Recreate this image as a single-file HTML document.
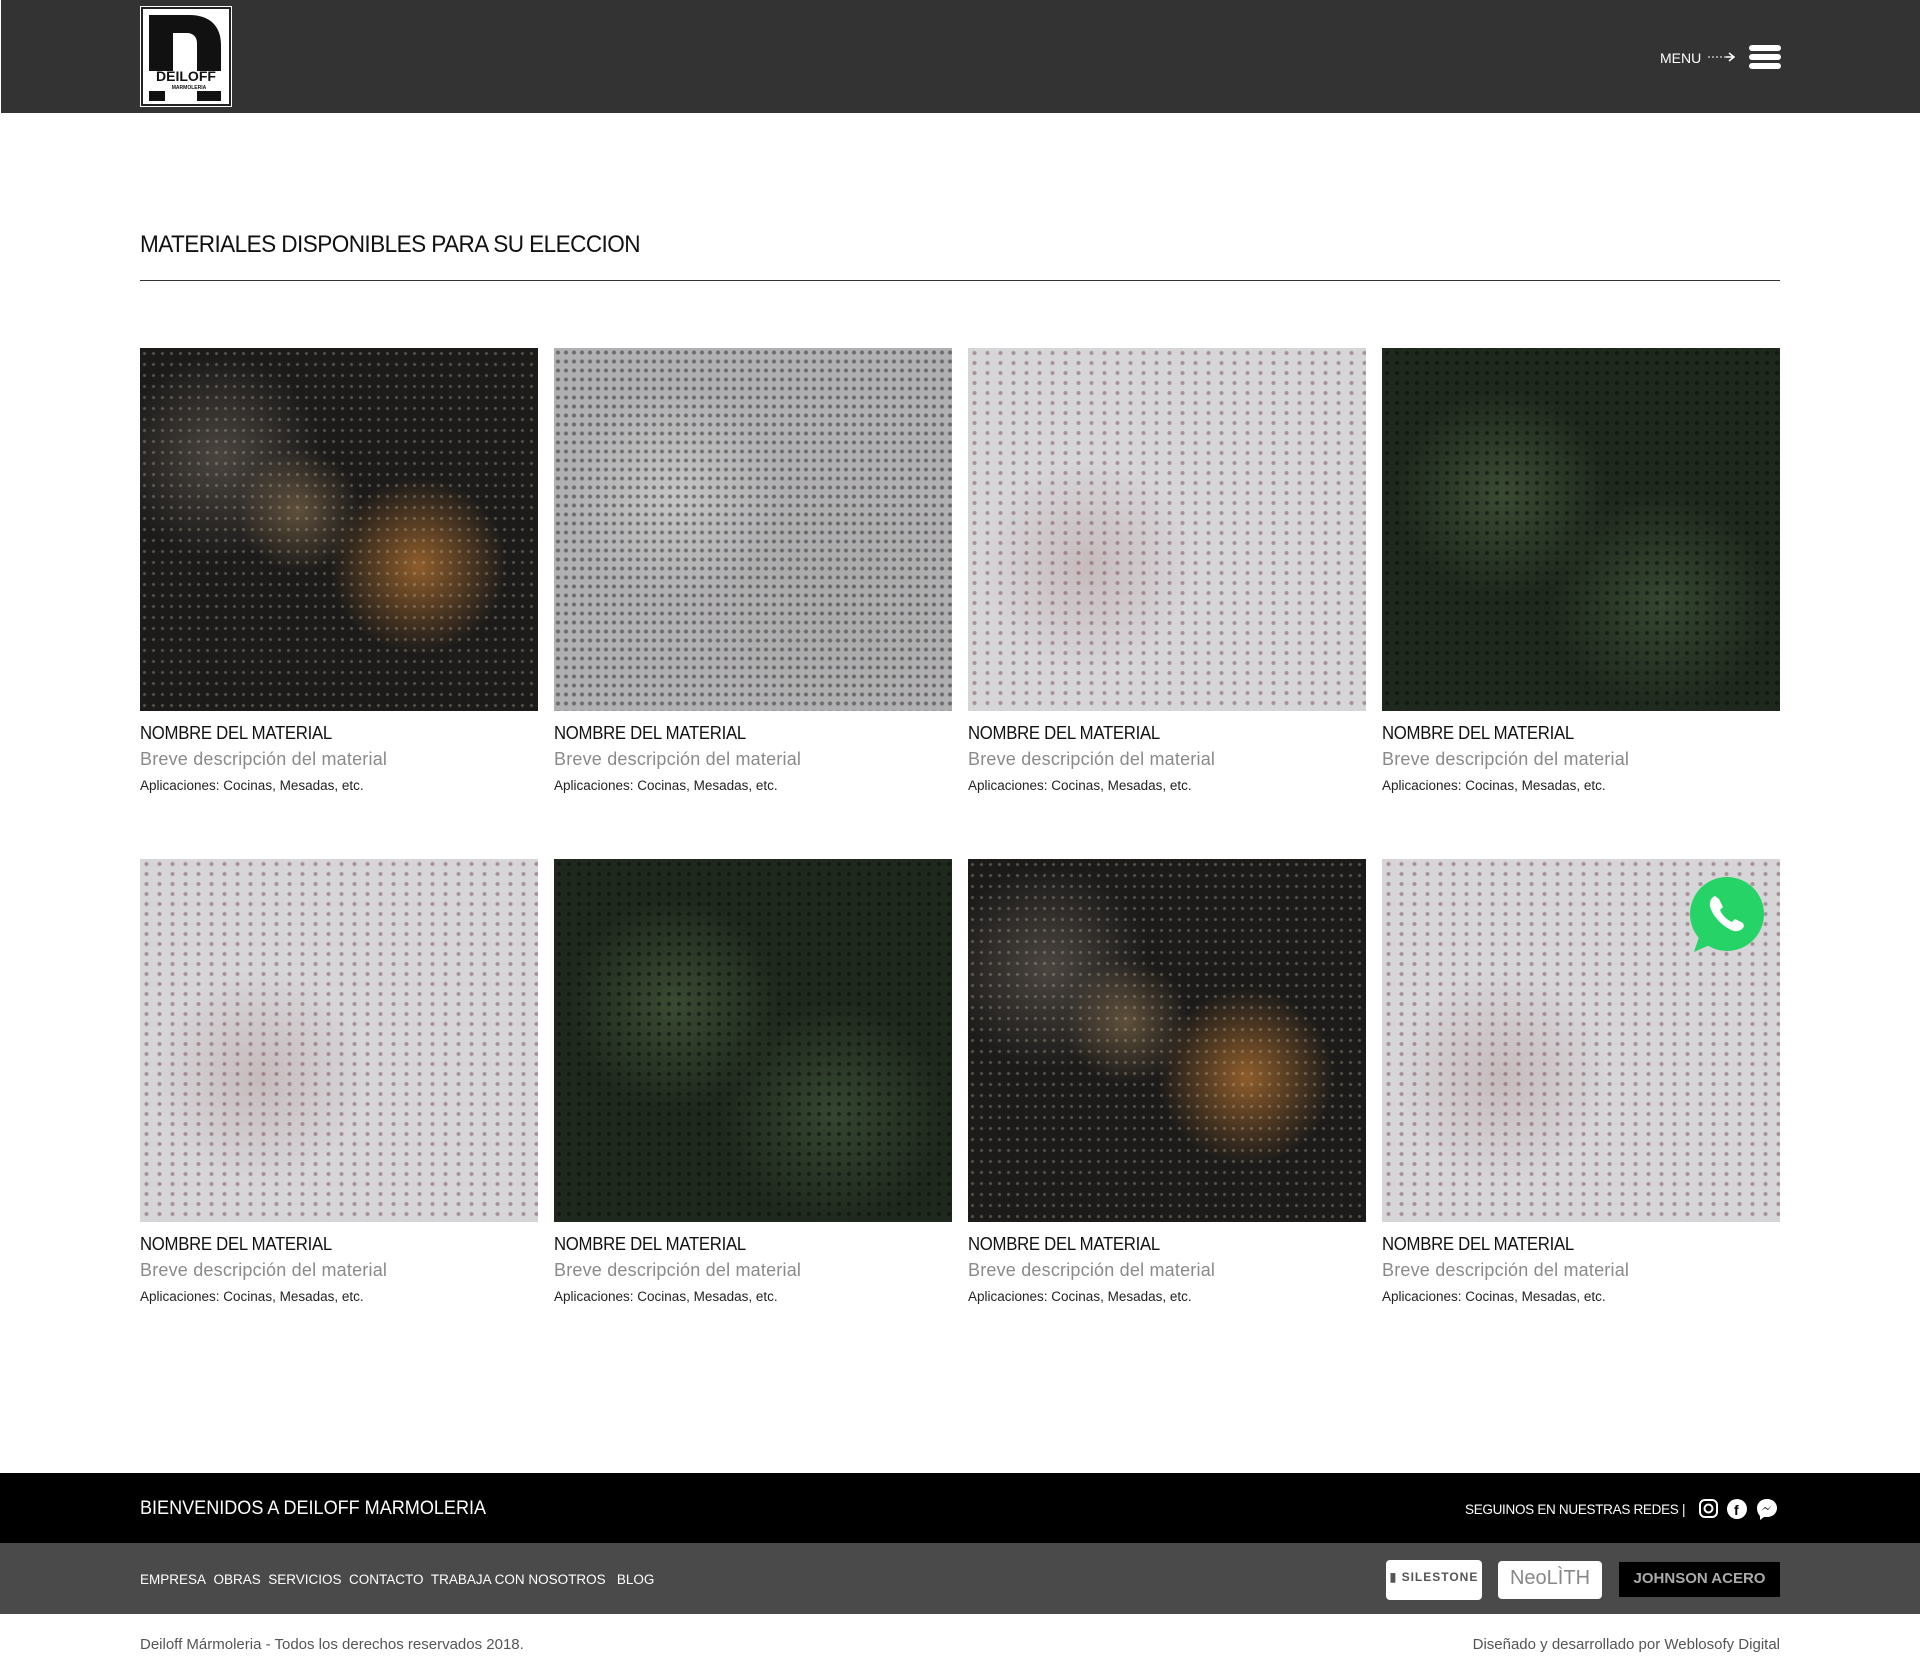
<!DOCTYPE html>
<html><head><meta charset="utf-8"><style>
*{margin:0;padding:0;box-sizing:border-box}
body{width:1920px;height:1674px;position:relative;background:#fff;font-family:"Liberation Sans",sans-serif;overflow:hidden}
.abs{position:absolute}
header{position:absolute;left:0;top:0;width:1920px;height:113px;background:#333;border-left:1px solid #fff}
.logo{left:140px;top:7px;width:90px;height:99px;background:#fff;border:2px solid #222;outline:1px solid #fff}
.card{position:absolute;width:398px}
.img{width:398px;height:363px}
.t{font-size:18px;color:#111;margin-top:12px;letter-spacing:-0.3px;transform:scaleX(.93);transform-origin:left}
.d{font-size:18px;color:#8a8a8a;margin-top:5px;letter-spacing:0.2px}
.a{font-size:13.5px;color:#222;margin-top:8px}
.dark{background:radial-gradient(circle,rgba(200,190,170,.35) 1px,transparent 2px) 0 0/9px 11px,radial-gradient(circle at 70% 60%,rgba(190,120,50,.7) 0,transparent 25%),radial-gradient(circle at 40% 45%,rgba(160,130,90,.5) 0,transparent 20%),radial-gradient(circle at 20% 30%,rgba(120,110,100,.5) 0,transparent 25%),#1c1b1a}
.gray{background:radial-gradient(circle,rgba(40,35,40,.5) 1.5px,transparent 2.5px) 0 0/8px 9px,radial-gradient(circle at 30% 40%,#c4c4c4 0,transparent 30%),radial-gradient(circle at 70% 70%,#aaa 0,transparent 35%),#b0afb1}
.light{background:radial-gradient(circle,rgba(110,60,70,.45) 1.5px,transparent 2.5px) 0 0/13px 10px,radial-gradient(circle at 30% 60%,rgba(150,110,110,.25) 0,transparent 30%),#d6d5d8}
.green{background:radial-gradient(circle,rgba(10,15,10,.6) 1.5px,transparent 2.5px) 0 0/10px 10px,radial-gradient(circle at 30% 40%,#3a4a32 0,transparent 30%),radial-gradient(circle at 70% 70%,#354530 0,transparent 30%),#1e281d}
.f{color:#fff}
</style></head><body>
<header>
<div class="abs logo">
<svg width="86" height="95" viewBox="0 0 86 95"><path d="M6 6h40c22 0 32 12 32 30v26H54V34c0-6-4-10-10-10H30v38H6z" fill="#111"/><text x="43" y="72" font-size="14" font-weight="bold" text-anchor="middle" fill="#111" font-family="Liberation Sans">DEILOFF</text><text x="46" y="80" font-size="5" font-weight="bold" text-anchor="middle" fill="#111" font-family="Liberation Sans">MARMOLERIA</text><rect x="6" y="82" width="16" height="10" fill="#111"/><rect x="54" y="82" width="24" height="10" fill="#111"/></svg>
</div>
<div class="abs f" style="left:1659px;top:50px;font-size:14px">MENU</div>
<svg class="abs" style="left:1707px;top:50px" width="28" height="14"><path d="M0 7h18" stroke="#fff" stroke-dasharray="2 2"/><path d="M18 7h8M21 3l5 4-5 4" stroke="#fff" fill="none" stroke-width="1.5"/></svg>
<div class="abs" style="left:1748px;top:45px;width:32px;height:6px;background:#fff;border-radius:3px"></div>
<div class="abs" style="left:1748px;top:54px;width:32px;height:6px;background:#fff;border-radius:3px"></div>
<div class="abs" style="left:1748px;top:63px;width:32px;height:6px;background:#fff;border-radius:3px"></div>
</header>
<div class="abs" style="left:140px;top:231px;font-size:24px;color:#111;letter-spacing:-0.6px;transform:scaleX(.94);transform-origin:left">MATERIALES DISPONIBLES PARA SU ELECCION</div>
<div class="abs" style="left:140px;top:280px;width:1640px;height:1px;background:#333"></div>

<div class="card" style="left:140px;top:348px"><div class="img dark"></div><div class="t">NOMBRE DEL MATERIAL</div><div class="d">Breve descripción del material</div><div class="a">Aplicaciones: Cocinas, Mesadas, etc.</div></div>
<div class="card" style="left:554px;top:348px"><div class="img gray"></div><div class="t">NOMBRE DEL MATERIAL</div><div class="d">Breve descripción del material</div><div class="a">Aplicaciones: Cocinas, Mesadas, etc.</div></div>
<div class="card" style="left:968px;top:348px"><div class="img light"></div><div class="t">NOMBRE DEL MATERIAL</div><div class="d">Breve descripción del material</div><div class="a">Aplicaciones: Cocinas, Mesadas, etc.</div></div>
<div class="card" style="left:1382px;top:348px"><div class="img green"></div><div class="t">NOMBRE DEL MATERIAL</div><div class="d">Breve descripción del material</div><div class="a">Aplicaciones: Cocinas, Mesadas, etc.</div></div>
<div class="card" style="left:140px;top:859px"><div class="img light"></div><div class="t">NOMBRE DEL MATERIAL</div><div class="d">Breve descripción del material</div><div class="a">Aplicaciones: Cocinas, Mesadas, etc.</div></div>
<div class="card" style="left:554px;top:859px"><div class="img green"></div><div class="t">NOMBRE DEL MATERIAL</div><div class="d">Breve descripción del material</div><div class="a">Aplicaciones: Cocinas, Mesadas, etc.</div></div>
<div class="card" style="left:968px;top:859px"><div class="img dark"></div><div class="t">NOMBRE DEL MATERIAL</div><div class="d">Breve descripción del material</div><div class="a">Aplicaciones: Cocinas, Mesadas, etc.</div></div>
<div class="card" style="left:1382px;top:859px"><div class="img light"></div><div class="t">NOMBRE DEL MATERIAL</div><div class="d">Breve descripción del material</div><div class="a">Aplicaciones: Cocinas, Mesadas, etc.</div></div>

<svg class="abs" style="left:1688px;top:876px" width="78" height="78" viewBox="0 0 78 78"><circle cx="39" cy="38" r="37" fill="#25d366"/><path d="M6 76l6-18 12 10z" fill="#25d366"/><path d="M27 20c-3 1-6 5-5 10 2 10 14 22 24 25 5 1 9-2 10-5l-1-3-8-4-3 3c-5-2-10-7-12-12l3-3-4-8z" fill="#fff"/></svg>

<div class="abs" style="left:0;top:1473px;width:1920px;height:70px;background:#000"></div>
<div class="abs f" style="left:140px;top:1498px;font-size:19px;transform:scaleX(.95);transform-origin:left">BIENVENIDOS A DEILOFF MARMOLERIA</div>
<div class="abs f" style="left:1465px;top:1502px;font-size:13.5px;letter-spacing:-0.3px;width:220px;white-space:nowrap">SEGUINOS EN NUESTRAS REDES |</div>
<svg class="abs" style="left:1697px;top:1498px" width="84" height="22"><rect x="3" y="2" width="17" height="17" rx="5" fill="none" stroke="#fff" stroke-width="2"/><circle cx="11.5" cy="10.5" r="4" fill="none" stroke="#fff" stroke-width="2"/><circle cx="40" cy="11" r="10" fill="#fff"/><text x="37" y="17" font-size="14" font-weight="bold" fill="#000" font-family="Liberation Sans">f</text><path d="M70 1c6 0 10 4 10 9s-4 9-10 9l-3 0-4 3 0-4c-2-2-3-5-3-8 0-5 4-9 10-9z" fill="#fff"/><path d="M64 13l4-4 3 2 4-4-4 5-3-2z" fill="#000"/></svg>
<div class="abs" style="left:0;top:1543px;width:1920px;height:71px;background:#4a4a4a"></div>
<div class="abs f" style="left:140px;top:1572px;font-size:13.5px;letter-spacing:0px;white-space:nowrap">EMPRESA&nbsp; OBRAS&nbsp; SERVICIOS&nbsp; CONTACTO&nbsp; TRABAJA CON NOSOTROS&nbsp;&nbsp; BLOG</div>
<div class="abs" style="left:1386px;top:1560px;width:96px;height:40px;background:#fff;border-radius:4px;font-size:12px;font-weight:bold;color:#555;text-align:center;padding-top:10px;letter-spacing:1px">▮ SILESTONE</div>
<div class="abs" style="left:1498px;top:1561px;width:104px;height:38px;background:#fff;border-radius:4px;font-size:20px;color:#888;text-align:center;padding-top:6px">NeoLÌTH</div>
<div class="abs" style="left:1619px;top:1562px;width:161px;height:35px;background:#000;font-size:15px;font-weight:bold;color:#aaa;text-align:center;padding-top:8px">JOHNSON ACERO</div>
<div class="abs" style="left:140px;top:1636px;font-size:15px;color:#555">Deiloff Mármoleria - Todos los derechos reservados 2018.</div>
<div class="abs" style="right:140px;top:1636px;font-size:15px;color:#555">Diseñado y desarrollado por Weblosofy Digital</div>
</body></html>
